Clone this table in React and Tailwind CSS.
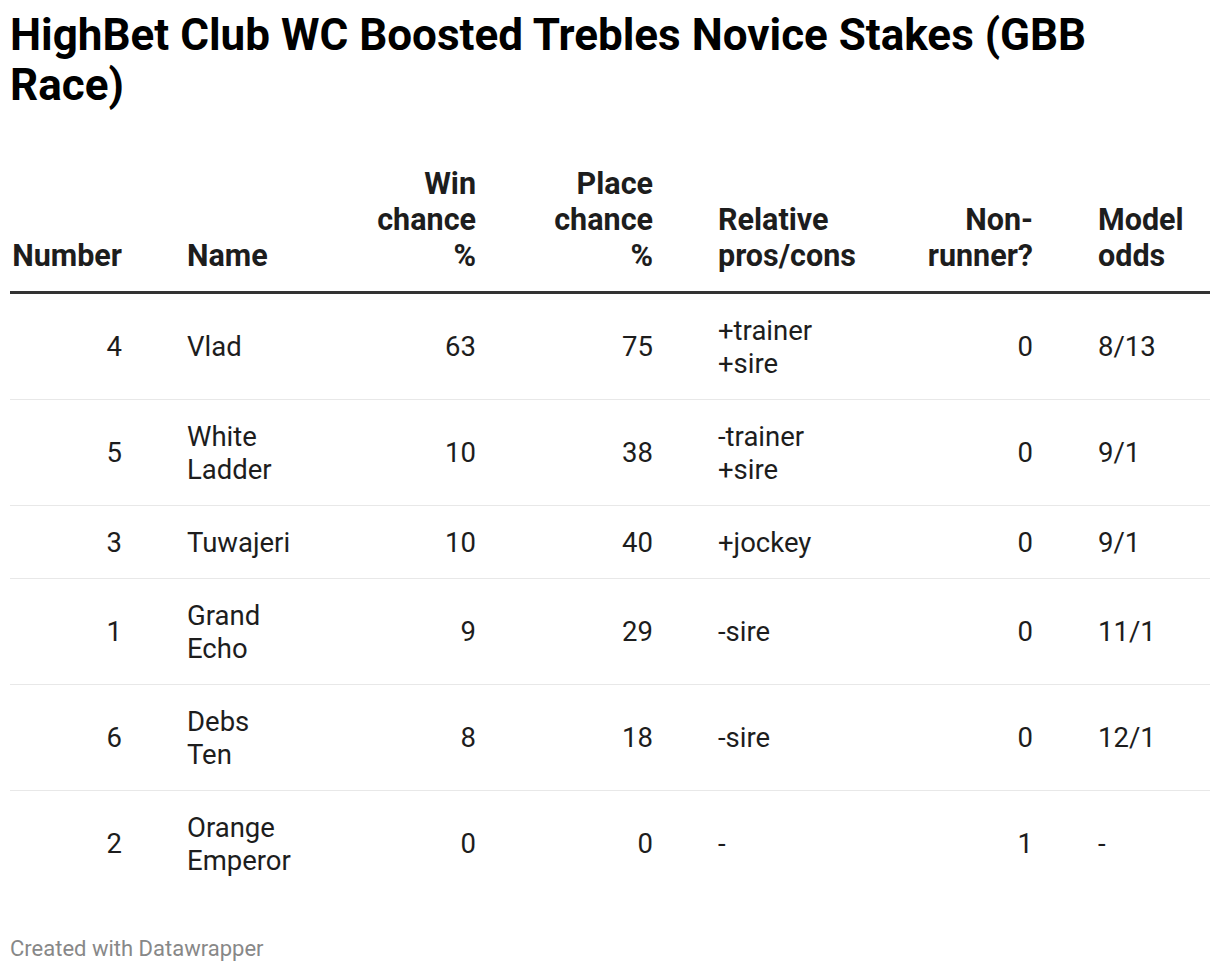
import React from "react";

const rows = [
  { n: "4", name: ["Vlad"], win: "63", place: "75", rel: ["+trainer", "+sire"], nr: "0", odds: "8/13" },
  { n: "5", name: ["White", "Ladder"], win: "10", place: "38", rel: ["-trainer", "+sire"], nr: "0", odds: "9/1" },
  { n: "3", name: ["Tuwajeri"], win: "10", place: "40", rel: ["+jockey"], nr: "0", odds: "9/1" },
  { n: "1", name: ["Grand", "Echo"], win: "9", place: "29", rel: ["-sire"], nr: "0", odds: "11/1" },
  { n: "6", name: ["Debs", "Ten"], win: "8", place: "18", rel: ["-sire"], nr: "0", odds: "12/1" },
  { n: "2", name: ["Orange", "Emperor"], win: "0", place: "0", rel: ["-"], nr: "1", odds: "-" },
];

const grid = "grid grid-cols-[112px_108px_116px_112px_138px_112px_112px] gap-x-[65px]";

function Lines({ items }) {
  return items.map((t, i) => (
    <div key={i} className="whitespace-nowrap">{t}</div>
  ));
}

export default function App() {
  return (
    <div className="bg-white min-h-[972px] px-[10px] pt-[10px] text-[#1d1d1d]" style={{ fontFamily: "Roboto, 'Liberation Sans', sans-serif" }}>
      <h1 className="text-[44px] font-bold leading-[50px] text-[#000]">
        HighBet Club WC Boosted Trebles Novice Stakes (GBB Race)
      </h1>
      <div className="mt-[56px]">
        <div className={`${grid} items-end font-bold text-[30.5px] leading-[36px] text-[#1d1d1d] pb-[17px] border-b-[3px] border-[#333]`}>
          <div className="text-right">Number</div>
          <div className="text-left">Name</div>
          <div className="text-right"><Lines items={["Win", "chance", "%"]} /></div>
          <div className="text-right"><Lines items={["Place", "chance", "%"]} /></div>
          <div className="text-left"><Lines items={["Relative", "pros/cons"]} /></div>
          <div className="text-right"><Lines items={["Non-", "runner?"]} /></div>
          <div className="text-left"><Lines items={["Model", "odds"]} /></div>
        </div>
        {rows.map((r, i) => (
          <div
            key={i}
            className={`${grid} items-center text-[27.5px] leading-[33px] py-[19.5px] ${i < rows.length - 1 ? "border-b border-[#e8e8e8]" : ""}`}
          >
            <div className="text-right">{r.n}</div>
            <div className="text-left"><Lines items={r.name} /></div>
            <div className="text-right">{r.win}</div>
            <div className="text-right">{r.place}</div>
            <div className="text-left"><Lines items={r.rel} /></div>
            <div className="text-right">{r.nr}</div>
            <div className="text-left">{r.odds}</div>
          </div>
        ))}
      </div>
      <div className="mt-[40px] text-[22px] leading-[26px] text-[#888]">Created with Datawrapper</div>
    </div>
  );
}
